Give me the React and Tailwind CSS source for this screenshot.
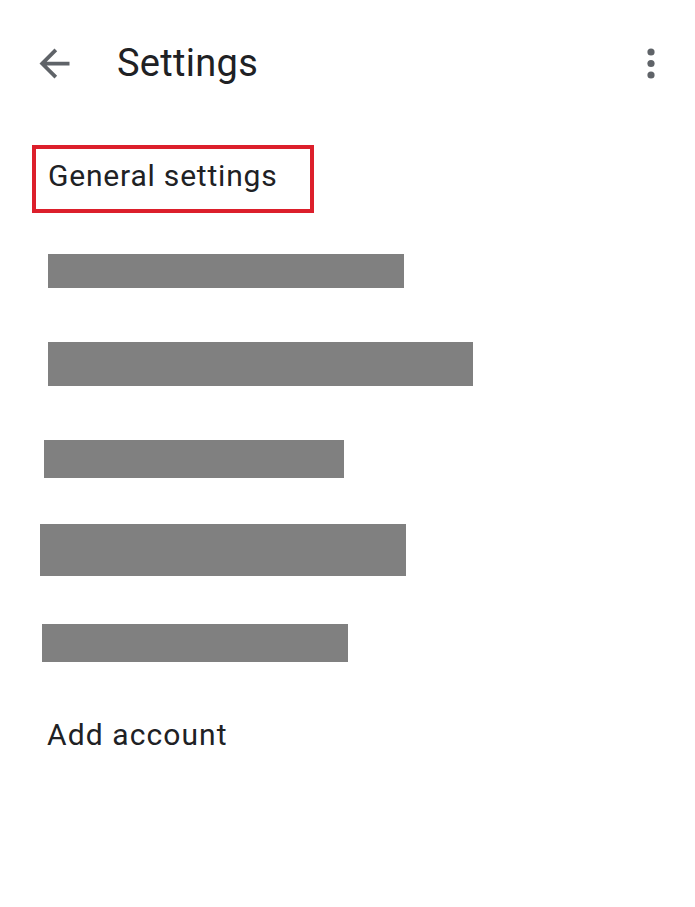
export default function App() {
  const bars = [
    { ml: 'ml-[48px]', w: 'w-[356px]', h: 'h-[34px]', mt: 'mt-[41px]' },
    { ml: 'ml-[48px]', w: 'w-[425px]', h: 'h-[44px]', mt: 'mt-[54px]' },
    { ml: 'ml-[44px]', w: 'w-[300px]', h: 'h-[38px]', mt: 'mt-[54px]' },
    { ml: 'ml-[40px]', w: 'w-[366px]', h: 'h-[52px]', mt: 'mt-[46px]' },
    { ml: 'ml-[42px]', w: 'w-[306px]', h: 'h-[38px]', mt: 'mt-[48px]' },
  ];

  return (
    <div className="w-[695px] h-[907px] bg-white font-['Roboto',sans-serif] text-[#202124] overflow-hidden">
      {/* top bar */}
      <div className="flex items-center h-[126px] relative">
        <svg viewBox="0 0 24 24" className="w-[45px] h-[45px] ml-[32px] fill-[#5f6368]">
          <path d="M20 11H7.83l5.59-5.59L12 4l-8 8 8 8 1.41-1.41L7.83 13H20v-2z" />
        </svg>
        <span className="ml-[40px] text-[38px] leading-[44px] tracking-[0.3px]">Settings</span>
        <svg viewBox="0 0 10 32" className="absolute left-[646px] top-[47px] w-[10px] h-[32px] fill-[#5f6368]">
          <circle cx="5" cy="5" r="3.6" />
          <circle cx="5" cy="16.5" r="3.6" />
          <circle cx="5" cy="28" r="3.6" />
        </svg>
      </div>

      {/* highlighted entry */}
      <div className="mt-[19px] ml-[32px] w-[282px] h-[68px] border-[4px] border-[#dc1f2b] flex items-center pl-[12px] pb-[6px]">
        <span className="text-[30px] leading-[36px] tracking-[0.8px]">General settings</span>
      </div>

      {/* redacted accounts */}
      {bars.map((b, i) => (
        <div key={i} className={`${b.ml} ${b.w} ${b.h} ${b.mt} bg-[#808080]`} />
      ))}

      <div className="mt-[55px] ml-[47px] text-[30px] leading-[36px] tracking-[1.1px]">Add account</div>
    </div>
  );
}
